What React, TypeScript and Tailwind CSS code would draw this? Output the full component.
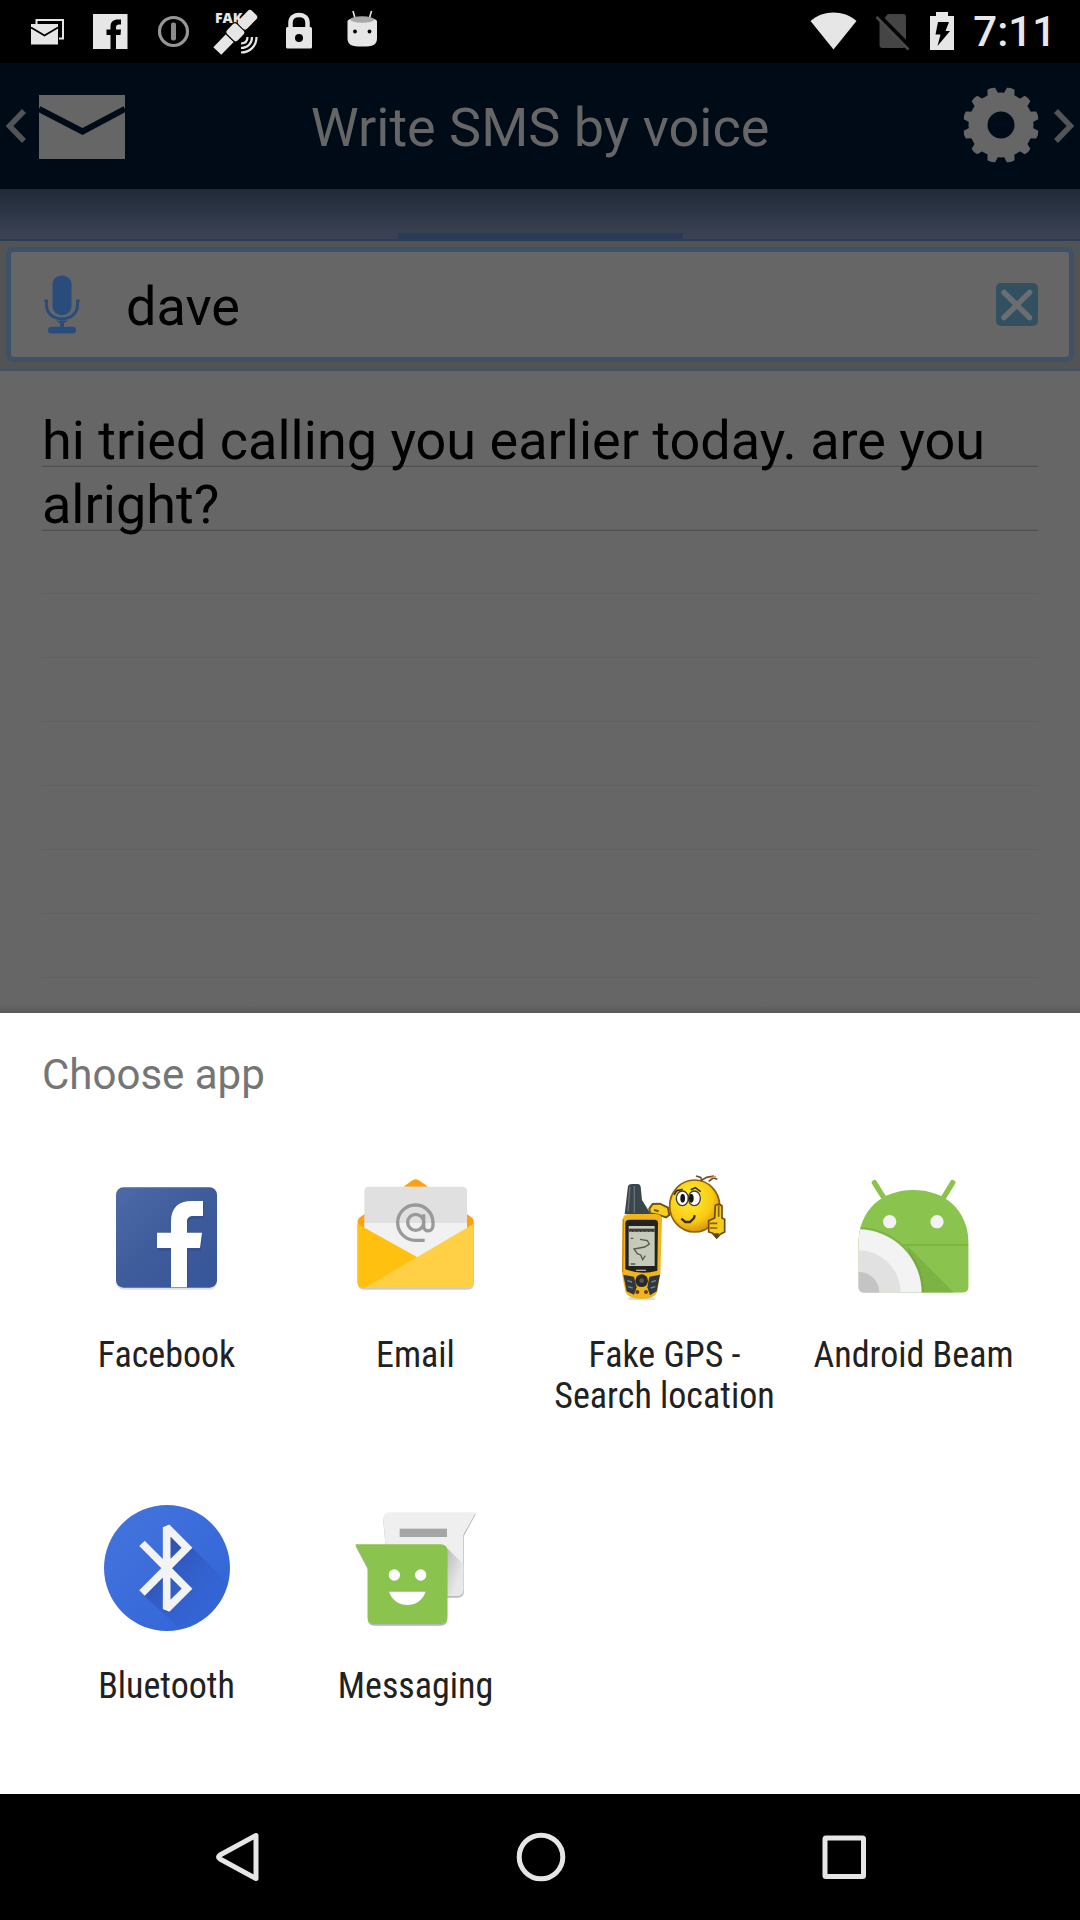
import type { ReactNode } from "react";

function StatusSlot({ children, label }: { children: ReactNode; label: string }) {
  return (
    <svg viewBox="0 0 63 63" className="h-[63px] w-[63px] shrink-0" role="img" aria-label={label}>
      {children}
    </svg>
  );
}

function StatusBar() {
  return (
    <div className="flex h-[63px] items-center justify-between bg-black pl-4 pr-6">
      <div className="flex">
        <StatusSlot label="New mail">
          <path d="M20.500 24V20H47V38.500H43" fill="none" stroke="#e6e6e6" strokeWidth="2" />
          <rect x="15" y="24" width="27" height="20.500" fill="#e6e6e6" />
          <path d="M15 27.500l13.500 8L42 27.500" fill="none" stroke="#000" strokeWidth="1.800" />
        </StatusSlot>
        <StatusSlot label="Facebook">
          <rect x="14" y="14" width="34.500" height="35" fill="#e6e6e6" />
          <path
            d="M31.500 49.500V35H27.500V29.500H31.500V27C31.500 21.500 34.500 19.500 39 19.500H42V24.500H40C38 24.500 37 25.500 37 27.500V29.500H42L41.500 35H37V49.500Z"
            fill="#000"
          />
        </StatusSlot>
        <StatusSlot label="Info">
          <circle cx="31.500" cy="31.500" r="14" fill="none" stroke="#969696" strokeWidth="3.200" />
          <rect x="29" y="22.500" width="5" height="18" rx="2" fill="#8c8c8c" />
        </StatusSlot>
        <StatusSlot label="Fake location">
          <text x="10" y="23" fontSize="14" fontWeight="800" fill="#e6e6e6" fontFamily="Open Sans, sans-serif">
            FAK
          </text>
          <g transform="rotate(-46 30 32)" fill="#e6e6e6">
            <rect x="4" y="27" width="18" height="11" />
            <rect x="22.500" y="24.500" width="15" height="16" rx="3.500" stroke="#000" strokeWidth="1.200" />
            <rect x="38" y="26.500" width="19" height="12" rx="3" />
          </g>
          <g fill="none" stroke="#e6e6e6" strokeWidth="2.200">
            <path d="M36 43.500c4 0 6.500-2.500 6.500-6.500" />
            <path d="M36 48c6.500 0 11-4.500 11-11" />
            <path d="M36 52.500c9 0 15.500-6.500 15.500-15.500" />
          </g>
        </StatusSlot>
        <StatusSlot label="Locked">
          <path d="M22.500 29V22.500c0-10 17-10 17 0V29" fill="none" stroke="#e6e6e6" strokeWidth="4.500" />
          <rect x="18" y="27" width="26" height="21.500" rx="1.500" fill="#e6e6e6" />
          <circle cx="31" cy="38" r="4" fill="#000" />
        </StatusSlot>
        <StatusSlot label="Android">
          <path d="M24 18l-2-7M38.500 18l2-7" stroke="#e6e6e6" strokeWidth="1.600" />
          <path d="M16.500 21c3-5 26-5 29.500 0v17c0 7-4 8.500-14.700 8.500s-14.800-1.500-14.800-8.500z" fill="#e6e6e6" />
          <ellipse cx="31.300" cy="19.500" rx="12" ry="3.200" fill="#a8a8a8" />
          <circle cx="24" cy="31.500" r="1.900" fill="#000" />
          <circle cx="38.500" cy="31.500" r="1.900" fill="#000" />
        </StatusSlot>
      </div>
      <div className="flex items-center">
        <svg viewBox="0 0 54 63" className="h-[63px] w-[54px]" role="img" aria-label="Wi-Fi">
          <path d="M3.500 21C16.500 9.800 36.500 9.800 49.500 21L26.500 49.500Z" fill="#e6e6e6" />
        </svg>
        <svg viewBox="0 0 54 63" className="h-[63px] w-[54px]" role="img" aria-label="No SIM">
          <path d="M20 22l7-8h15a3 3 0 0 1 3 3v28a3 3 0 0 1-3 3H21.500a3 3 0 0 1-3-3V22z" fill="#454545" />
          <path d="M17.500 15.500L49 47.500" stroke="#000" strokeWidth="5" />
          <path d="M15.500 17L47.500 49.500" stroke="#4a4a4a" strokeWidth="2.600" />
        </svg>
        <svg viewBox="0 0 54 63" className="h-[63px] w-[54px]" role="img" aria-label="Charging">
          <path d="M15 16h6v-4h12v4h6v34H15z" fill="#e6e6e6" />
          <path d="M23 22h11l-3.500 9H35L22.500 46l3-11.500H20.500z" fill="#000" />
        </svg>
        <span className="ml-1 text-[42px] leading-[50px] font-medium text-[#e8e8e8]">7:11</span>
      </div>
    </div>
  );
}

const teeth = [15, 45, 75, 105, 135, 165, 195, 225, 255, 285, 315, 345];

function Header() {
  return (
    <header className="flex h-[126px] items-center justify-between bg-[#000b18] px-1">
      <button type="button" aria-label="Messages" className="flex items-center">
        <svg viewBox="0 0 122 80" className="h-20 w-[122px]">
          <path d="M20 25L5.500 40L20 55" fill="none" stroke="#525456" strokeWidth="5.500" />
          <rect x="35" y="9" width="86" height="64" fill="#666" />
          <path d="M35 23L78.500 45.500L121 23" fill="none" stroke="#000b18" strokeWidth="6" />
        </svg>
      </button>
      <h1 className="pt-1 text-[54px] leading-[64px] text-[#666]">Write SMS by voice</h1>
      <button type="button" aria-label="Settings" className="flex items-center">
        <svg viewBox="0 0 122 80" className="h-20 w-[122px]">
          <g fill="#666">
            <circle cx="47" cy="39" r="32.500" />
            {teeth.map((angle) => (
              <path key={angle} d="M41 10L43 1.500Q47 0 51 1.500L53 10Z" transform={`rotate(${angle} 47 39)`} />
            ))}
          </g>
          <circle cx="47" cy="39" r="13.500" fill="#000b18" />
          <path d="M102 25L116.500 40L102 55" fill="none" stroke="#525456" strokeWidth="5.500" />
        </svg>
      </button>
    </header>
  );
}

function TabStrip() {
  return (
    <div className="flex h-[52px] items-end justify-center border-b-2 border-[#2a3d52] bg-linear-to-b from-[#1f2a37] to-[#3c4356]">
      <div className="h-[6px] w-[285px] bg-[#2c3a56]" />
    </div>
  );
}

function RecipientField() {
  return (
    <div className="border-b-2 border-[#3e5268] bg-[#525354] px-[6px] pt-[6px] pb-[7px]">
      <div className="flex h-[115px] items-center justify-between rounded-lg border-5 border-[#3f5167] bg-[#666] pr-[31px] pl-[33px]">
        <button type="button" aria-label="Speak recipient">
          <svg viewBox="0 0 36 61" className="h-[59px] w-9" fill="none" stroke="#2a4c7a" preserveAspectRatio="none">
            <rect x="8.500" y="0.500" width="19" height="41" rx="9" fill="#2a4c7a" stroke="none" />
            <path d="M0 26.500h4M32 26.500h4" strokeWidth="2.500" />
            <path d="M2.500 26v5c0 19 31 19 31 0v-5" strokeWidth="3" />
            <path d="M12 47h12l-4 3v5h-4v-5z" fill="#2a4c7a" stroke="none" />
            <rect x="4" y="53.500" width="28" height="7" rx="3.500" fill="#2a4c7a" stroke="none" />
          </svg>
        </button>
        <input
          type="text"
          aria-label="Recipient"
          defaultValue="dave"
          className="ml-[46px] min-w-0 flex-1 bg-transparent pt-1 text-[54px] leading-[64px] text-black outline-none"
        />
        <button type="button" aria-label="Clear recipient">
          <svg viewBox="0 0 42 43" className="h-[43px] w-[42px]">
            <rect width="42" height="43" rx="5" fill="#335061" />
            <path d="M8 9.500L33.500 34.500M33.500 9.500L8 34.500" stroke="#6b6e70" strokeWidth="5.500" strokeLinecap="round" />
          </svg>
        </button>
      </div>
    </div>
  );
}

function MessageArea() {
  return (
    <div className="flex flex-1 flex-col bg-[#666] pt-[38px]">
      <textarea
        aria-label="Message"
        defaultValue="hi tried calling you earlier today. are you alright?"
        className="mx-[42px] block flex-1 resize-none overflow-hidden bg-[linear-gradient(#0000_57px,#505050_57px,#505050_58px,#0000_58px,#0000_121px,#505050_121px,#505050_122px,#0000_122px),repeating-linear-gradient(#0000_0px,#0000_56px,#606060_56px,#606060_57px,#0000_57px,#0000_64px)] text-[54px] leading-[64px] text-black outline-none"
      />
      <div className="h-2 bg-linear-to-b from-[#666] to-[#585858]" />
    </div>
  );
}

const iconClass = "h-[126px] w-[126px]";

function FacebookIcon() {
  return (
    <svg viewBox="72 72 378 378" className={iconClass} aria-hidden="true">
      <defs>
        <linearGradient id="fb" x1="0" y1="0" x2="1" y2="1">
          <stop offset="0" stopColor="#4c69a8" />
          <stop offset="0.500" stopColor="#3e5b9a" />
          <stop offset="1" stopColor="#36559b" />
        </linearGradient>
      </defs>
      <rect x="108" y="117" width="303" height="302" rx="22" fill="#000" opacity="0.120" />
      <rect x="108" y="112" width="303" height="301" rx="22" fill="url(#fb)" />
      <path
        d="M273 403V294H231V248H273V215C273 173 296 153 335 153H369V198H341C327 198 321 204 321 215V248H366L360 294H321V403Z"
        transform="translate(3 9)"
        fill="#1f3c78"
        opacity="0.250"
      />
      <path
        d="M273 412V294H231V248H273V215C273 173 296 153 335 153H369V198H341C327 198 321 204 321 215V248H366L360 294H321V412Z"
        fill="#fff"
      />
    </svg>
  );
}

function EmailIcon() {
  return (
    <svg viewBox="69 72 378 378" className={iconClass} aria-hidden="true">
      <rect x="83" y="210" width="349" height="209" rx="18" fill="#000" opacity="0.200" />
      <path d="M83 230V215Q83 205 92 200L245 93Q257 83 269 93L422 200Q431 205 431 215V400H83Z" fill="#ffa010" />
      <path d="M80 195L101 193V110H413V193L434 195V80H290V108H222V80H80Z" fill="#fff" />
      <path d="M222 110L245 93Q257 85 269 93L294 110Z" fill="#ffa010" />
      <path d="M103 240V124Q103 110 117 110H397Q411 110 411 124V240L257 330Z" fill="#e0e0e0" />
      <path d="M103 219H411V240L257 330L103 240Z" fill="#f1f1f1" />
      <path d="M83 216Q83 222 90 226L270 326L120 414H100Q83 414 83 397Z" fill="#ffc010" />
      <path d="M431 216Q431 222 424 226L105 413Q108 414 112 414H413Q431 414 431 397Z" fill="#ffd045" />
      <g fill="none" stroke="#999" strokeWidth="10">
        <circle cx="257" cy="217" r="24" />
        <path d="M284 271H257A53 53 0 1 1 309 217V226C309 248 281 248 281 228V193" />
      </g>
    </svg>
  );
}

function GpsIcon() {
  return (
    <svg viewBox="186 72 378 378" className={iconClass} aria-hidden="true">
      <defs>
        <radialGradient id="smiley" cx="0.400" cy="0.350" r="0.700">
          <stop offset="0" stopColor="#ffee35" />
          <stop offset="0.650" stopColor="#f8cb12" />
          <stop offset="1" stopColor="#d58a0c" />
        </radialGradient>
      </defs>
      <ellipse cx="305" cy="446" rx="42" ry="7" fill="#ddd" />
      <path d="M264 108Q266 102 276 102H294Q301 102 302 110L306 150L326 182L330 192H254Z" fill="#39464b" />
      <path d="M270 110L264 184M283 108V188" stroke="#667277" strokeWidth="4" />
      <path d="M328 176L338 162L360 161L384 173L388 195L378 202L354 194L330 190Z" fill="#f2cf20" stroke="#74510d" strokeWidth="6" />
      <path d="M342 180l14 4" stroke="#74510d" strokeWidth="6" />
      <path d="M248 208Q250 192 270 192H346Q365 192 366 208L361 370L352 425Q345 445 305 447Q264 445 256 425L246 370Z" fill="#efb51a" />
      <path d="M250 208L248 365" stroke="#c48912" strokeWidth="4" />
      <path d="M256 220Q256 209 268 209H344Q354 209 354 220L352 362Q305 376 256 358Z" fill="#24221d" />
      <rect x="266" y="228" width="78" height="120" fill="#c5cabb" />
      <path d="M266 241H344" stroke="#3c3f38" strokeWidth="10" />
      <path d="M268 246H342" stroke="#c5cabb" strokeWidth="2" strokeDasharray="8 4" />
      <path d="M300 268l22 4 6 10-14 9-32 6 10 14 10 4 6 14 8-12" fill="none" stroke="#56594e" strokeWidth="4" />
      <path d="M272 265h8M272 342h14" stroke="#56594e" strokeWidth="4" />
      <path d="M288 361h30" stroke="#aaa" strokeWidth="4" />
      <path d="M250 374L282 380L290 412L282 434L260 424Z" fill="#30383d" />
      <path d="M360 374L328 380L322 412L330 436L350 424Z" fill="#30383d" />
      <circle cx="305" cy="392" r="19" fill="#272a2b" />
      <circle cx="305" cy="392" r="7" fill="#555" />
      <path d="M262 392l14 4M264 410l14 4M334 396l14-4M332 414l14-4" stroke="#7b8589" strokeWidth="4" />
      <circle cx="292" cy="426" r="6" fill="#6c3d13" />
      <circle cx="318" cy="426" r="6" fill="#6c3d13" />
      <ellipse cx="464" cy="168" rx="75" ry="78" fill="url(#smiley)" stroke="#8a6210" strokeWidth="5" />
      <path d="M468 78l14 4 4 12M486 90l14-8 22-4M506 94l14-10 12 4" fill="none" stroke="#7b4a1c" strokeWidth="5" />
      <path d="M510 84l18-4" stroke="#d99a67" strokeWidth="5" />
      <ellipse cx="427" cy="145" rx="18" ry="22" fill="#fff" stroke="#3d3a32" strokeWidth="4" />
      <ellipse cx="463" cy="145" rx="18" ry="22" fill="#fff" stroke="#3d3a32" strokeWidth="4" />
      <ellipse cx="428" cy="145" rx="7" ry="13" fill="#151515" />
      <ellipse cx="454" cy="145" rx="7" ry="13" fill="#151515" />
      <path d="M402 134l8-12 18-4M452 119l14-6 16 12" fill="none" stroke="#3b2b0a" strokeWidth="5" />
      <path d="M424 206l12 10h14l12-12 2-8" fill="none" stroke="#3b2b0a" strokeWidth="7" />
      <path d="M524 204l2-38 12-4 8 6v36l8 4v38l-12 6-12 12-12-14-12-4v-34z" fill="#f3cc1d" stroke="#6c4a0d" strokeWidth="5" />
      <path d="M510 220h22M510 234h22M536 166v34" stroke="#8a5e10" strokeWidth="5" />
      <path d="M522 250l8 16 8-16z" fill="#58420f" />
    </svg>
  );
}

function BeamIcon() {
  return (
    <svg viewBox="153 72 378 378" className={iconClass} aria-hidden="true">
      <defs>
        <clipPath id="beam-body">
          <path d="M175 285C175 175 250 120 340 120S506 175 506 285V408Q506 428 486 428H195Q175 428 175 408Z" />
        </clipPath>
      </defs>
      <path d="M223 98L255 149M458 98L427 149" stroke="#8bc34a" strokeWidth="16" strokeLinecap="round" />
      <g clipPath="url(#beam-body)">
        <rect x="170" y="115" width="340" height="320" fill="#8bc34f" />
        <path d="M310 285H506" stroke="#6fa53d" strokeWidth="3" />
        <path d="M320 285L462 428H360Z" fill="#76ad40" opacity="0.700" />
        <circle cx="175" cy="428" r="197" fill="#5d8c33" opacity="0.250" />
        <circle cx="175" cy="428" r="190" fill="#f3f3f3" />
        <circle cx="175" cy="428" r="127" fill="#e1e1e1" />
        <circle cx="175" cy="428" r="63" fill="#c4c4c4" />
      </g>
      <circle cx="269" cy="215" r="20" fill="#f3f3f3" />
      <circle cx="411" cy="215" r="20" fill="#f3f3f3" />
    </svg>
  );
}

function BluetoothIcon() {
  return (
    <svg viewBox="71 75 378 378" className={iconClass} aria-hidden="true">
      <defs>
        <linearGradient id="bt" x1="0" y1="0" x2="1" y2="1">
          <stop offset="0" stopColor="#4475dc" />
          <stop offset="1" stopColor="#3163d8" />
        </linearGradient>
        <linearGradient id="bt-shade" x1="0" y1="0" x2="1" y2="1">
          <stop offset="0.200" stopColor="#27469e" stopOpacity="0.700" />
          <stop offset="0.800" stopColor="#3163d8" stopOpacity="0" />
        </linearGradient>
        <clipPath id="bt-disc">
          <circle cx="260" cy="264" r="189" />
        </clipPath>
      </defs>
      <circle cx="260" cy="264" r="189" fill="url(#bt)" />
      <path
        d="M336 203L500 367L400 500L345 490L190 346L259 266V140Z"
        fill="url(#bt-shade)"
        clipPath="url(#bt-disc)"
      />
      <path
        d="M185 190L320 326L259 387V142L320 203L185 339"
        fill="none"
        stroke="#f3f3f3"
        strokeWidth="23"
        strokeLinejoin="miter"
        strokeMiterlimit="1.500"
      />
    </svg>
  );
}

function MessagingIcon() {
  return (
    <svg viewBox="99 75 378 378" className={iconClass} aria-hidden="true">
      <defs>
        <linearGradient id="msg-shade" x1="0" y1="0" x2="1" y2="1">
          <stop offset="0" stopColor="#b5b5b5" />
          <stop offset="0.700" stopColor="#e8e8e8" />
        </linearGradient>
      </defs>
      <path d="M190 123Q190 101 210 101H468L432 168V333Q432 353 412 353H210Z" fill="#bbb" />
      <path d="M190 119Q190 97 210 97H468L430 164V328Q430 348 410 348H210Z" fill="#efefef" />
      <path d="M375 198L430 253V328Q430 348 410 348H375Z" fill="url(#msg-shade)" />
      <rect x="239" y="146" width="142" height="25" fill="#a5a5a5" />
      <path d="M106 198H362Q382 198 382 218V417Q382 437 362 437H163Q143 437 143 417V268Z" fill="#999" opacity="0.700" />
      <path d="M106 193H362Q382 193 382 213V412Q382 432 362 432H163Q143 432 143 412V264Z" fill="#8bc34f" />
      <circle cx="223" cy="285" r="17" fill="#fff" />
      <circle cx="302" cy="285" r="17" fill="#fff" />
      <path d="M207 335H317C300 388 224 388 207 335Z" fill="#fff" />
    </svg>
  );
}

const apps = [
  { name: "Facebook", Icon: FacebookIcon },
  { name: "Email", Icon: EmailIcon },
  { name: "Fake GPS - Search location", Icon: GpsIcon },
  { name: "Android Beam", Icon: BeamIcon },
  { name: "Bluetooth", Icon: BluetoothIcon },
  { name: "Messaging", Icon: MessagingIcon },
];

function ChooserSheet() {
  return (
    <section aria-label="Choose app" className="bg-white px-[42px] pt-[37px] pb-[45px]">
      <h2 className="text-[42px] leading-[50px] text-[#757575]">Choose app</h2>
      <div className="mt-[74px] grid grid-cols-4 gap-y-[87px]">
        {apps.map(({ name, Icon }) => (
          <button key={name} type="button" className="flex flex-col items-center">
            <Icon />
            <span className="mt-[35px] min-h-[83px] text-center font-['Roboto_Condensed','Roboto',sans-serif] text-[36px] leading-[41px] text-[#212121]">
              {name}
            </span>
          </button>
        ))}
      </div>
    </section>
  );
}

function NavBar() {
  return (
    <nav className="grid h-[126px] grid-cols-3 items-center bg-black pr-[85px] pl-[87px]">
      <button type="button" aria-label="Back" className="flex justify-center">
        <svg viewBox="0 0 50 50" className="h-[50px] w-[50px]">
          <path d="M43 3.500V46.500L7 27Q4 25 7 23Z" fill="none" stroke="#e6e6e6" strokeWidth="5" strokeLinejoin="round" />
        </svg>
      </button>
      <button type="button" aria-label="Home" className="flex justify-center">
        <svg viewBox="0 0 50 50" className="h-[50px] w-[50px]">
          <circle cx="25" cy="25" r="21.800" fill="none" stroke="#e6e6e6" strokeWidth="5" />
        </svg>
      </button>
      <button type="button" aria-label="Recent apps" className="flex justify-center">
        <svg viewBox="0 0 50 50" className="h-[50px] w-[50px]">
          <rect x="6" y="6" width="38.500" height="38.500" rx="1" fill="none" stroke="#e6e6e6" strokeWidth="5" />
        </svg>
      </button>
    </nav>
  );
}

export default function App() {
  return (
    <div className="flex min-h-screen flex-col bg-black font-['Roboto',sans-serif]">
      <StatusBar />
      <Header />
      <TabStrip />
      <RecipientField />
      <MessageArea />
      <ChooserSheet />
      <NavBar />
    </div>
  );
}
